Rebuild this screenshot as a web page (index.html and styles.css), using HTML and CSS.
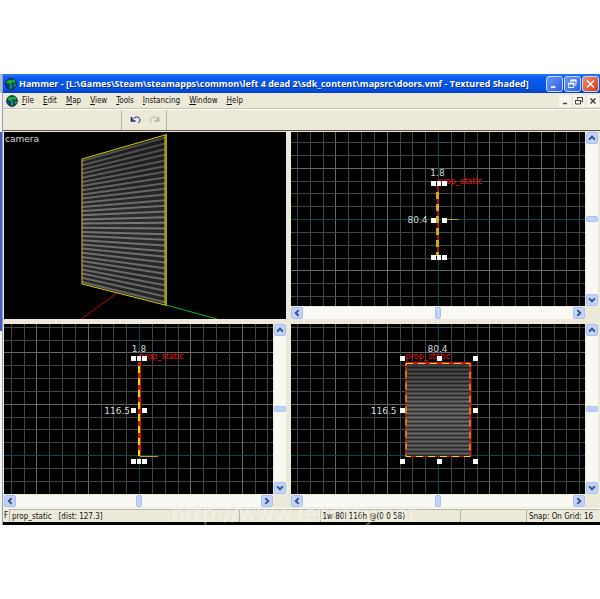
FILE: index.html
```
<!DOCTYPE html>
<html lang="en">
<head>
    <meta charset="UTF-8">
    <meta name="viewport" content="width=device-width, initial-scale=1.0">
    <title>Hammer</title>
    <link rel="stylesheet" href="styles.css">
</head>
<body>

    <!-- shared shapes -->
    <svg class="defs" width="0" height="0" aria-hidden="true">
        <defs>
            <symbol id="logo" viewBox="0 0 12 12">
                <circle cx="6" cy="6" r="5.4" fill="#1238a8" stroke="#06103c" stroke-width="0.8"/>
                <path d="M1 4 L4 1.4 L6.6 2.2 L8.6 1 L11 4 L8.4 5.4 L7 4.2 L6.4 6 L7.4 8 L6.6 11.4 L4.6 10.4 L5 7.4 L4 5.4 L2.4 6 Z" fill="#19b52c" stroke="#053c10" stroke-width="0.5"/>
                <path d="M9 6.4 L11 6 L10.4 8.6 L9 9 Z" fill="#19b52c"/>
            </symbol>
            <symbol id="up" viewBox="0 0 12 12">
                <path d="M2.5 8 L6 4.5 L9.5 8" fill="none" stroke="#3d5584" stroke-width="2.4"/>
            </symbol>
            <symbol id="down" viewBox="0 0 12 12">
                <path d="M2.5 4 L6 7.5 L9.5 4" fill="none" stroke="#3d5584" stroke-width="2.4"/>
            </symbol>
            <symbol id="left" viewBox="0 0 12 12">
                <path d="M8 2.5 L4.5 6 L8 9.5" fill="none" stroke="#3d5584" stroke-width="2.4"/>
            </symbol>
            <symbol id="right" viewBox="0 0 12 12">
                <path d="M4 2.5 L7.5 6 L4 9.5" fill="none" stroke="#3d5584" stroke-width="2.4"/>
            </symbol>
            <pattern id="metal" width="65" height="4" patternUnits="userSpaceOnUse">
                <rect width="65" height="4" fill="#5a5a5a"/>
                <rect width="65" height="1" y="1" fill="#707070"/>
                <rect width="65" height="1" y="3" fill="#303030"/>
            </pattern>
            <linearGradient id="shade" x1="0" y1="0" x2="0" y2="1">
                <stop offset="0" stop-color="#000" stop-opacity="0.45"/>
                <stop offset="0.5" stop-color="#000" stop-opacity="0.05"/>
                <stop offset="1" stop-color="#000" stop-opacity="0.2"/>
            </linearGradient>
        </defs>
    </svg>

    <div class="desktop">
        <div class="neighbor"></div>
        <div class="app">
            <header class="titlebar">
                <svg class="logo"><use href="#logo"/></svg>
                <h1>Hammer - [L:\Games\Steam\steamapps\common\left 4 dead 2\sdk_content\mapsrc\doors.vmf - Textured Shaded]</h1>
                <div class="window-buttons">
                    <button aria-label="Minimize"><svg viewBox="0 0 16 16"><path d="M4 11.5h5" stroke="#fff" stroke-width="2"/></svg></button>
                    <button aria-label="Restore"><svg viewBox="0 0 16 16"><path d="M6 6V3.5h6V9H10" fill="none" stroke="#fff"/><path d="M6 4h6.500" stroke="#fff" stroke-width="2"/><path d="M3.500 7.500h6v4.500h-6z" fill="none" stroke="#fff"/><path d="M3 7.500h7" stroke="#fff" stroke-width="2"/></svg></button>
                    <button class="close" aria-label="Close"><svg viewBox="0 0 16 16"><path d="M4 4l8 8M12 4l-8 8" stroke="#fff" stroke-width="1.8"/></svg></button>
                </div>
            </header>

            <nav class="menubar">
                <svg class="logo"><use href="#logo"/></svg>
                <div class="menus">
                    <button><u>F</u>ile</button>
                    <button><u>E</u>dit</button>
                    <button><u>M</u>ap</button>
                    <button><u>V</u>iew</button>
                    <button><u>T</u>ools</button>
                    <button><u>I</u>nstancing</button>
                    <button><u>W</u>indow</button>
                    <button><u>H</u>elp</button>
                </div>
                <div class="child-buttons">
                    <button aria-label="Minimize document"><svg viewBox="0 0 12 12"><path d="M4 8.500h4" stroke="#444" stroke-width="1.500"/></svg></button>
                    <button aria-label="Restore document"><svg viewBox="0 0 12 12"><path d="M4.500 4.500V2.500h5v4H8M4 2.500h6" fill="none" stroke="#444"/><path d="M2.500 5.500h5v3.500h-5zM2 5.500h6" fill="none" stroke="#444"/></svg></button>
                    <button aria-label="Close document"><svg viewBox="0 0 12 12"><path d="M3.500 3.500l5 5M8.500 3.500l-5 5" stroke="#444" stroke-width="1.500"/></svg></button>
                </div>
            </nav>

            <div class="toolbar">
                <div class="tool-group">
                    <button aria-label="Undo"><svg viewBox="0 0 12 10"><path d="M1.500 2v4h4" fill="none" stroke="#16237e" stroke-width="1.600"/><path d="M2 5.500C3.500 2.500 6 1.500 8 2.200C10.800 3.200 10.500 7 8 8" fill="none" stroke="#16237e"/></svg></button>
                    <button aria-label="Redo" disabled><svg viewBox="0 0 12 10"><path d="M10.500 2v4h-4" fill="none" stroke="#b4b1a2" stroke-width="1.600"/><path d="M10 5.500C8.500 2.500 6 1.500 4 2.200C1.200 3.200 1.500 7 4 8" fill="none" stroke="#b4b1a2"/></svg></button>
                </div>
            </div>

            <main class="views">
                <section class="view camera">
                    <svg class="scene" viewBox="0 0 282 187" preserveAspectRatio="xMidYMid slice">
                        <path d="M113 161L77 187" stroke="#a81414"/>
                        <path d="M162 173L213 187" stroke="#00b828"/>
                        <polygon points="78,27 161,3 161,173 78,152" fill="#2e2e2e"/>
                        <g id="slats"></g>
                        <polygon points="78,27 161,3 161,173 78,152" fill="url(#shade)"/>
                        <polygon points="78,27 161,3 161,173 78,152" fill="none" stroke="#d2c800"/>
                        <path d="M162 2V174" stroke="#a39b10" stroke-width="2"/>
                        <text x="1" y="10" class="label">camera</text>
                    </svg>
                </section>

                <section class="view flat">
                    <svg class="scene" viewBox="0 0 295 174" preserveAspectRatio="xMidYMid slice">
                        <g class="grid" data-x="147" data-y="87" data-w="295" data-h="174"></g>
                        <path d="M156 87.500h12" stroke="#b0a600"/>
                        <text x="147" y="52" class="name">prop_static</text>
                        <path d="M147.500 54V125" stroke="#b01010" stroke-width="2"/>
                        <path d="M147 60V124" stroke="#c9b010" stroke-width="3" stroke-dasharray="7 5"/>
                        <path class="handle" d="M140 49h5v5h-5zM146 49h4v5h-4zM151 49h5v5h-5zM140 86h5v5h-5zM151 86h5v5h-5zM140 123h5v5h-5zM146 123h4v5h-4zM151 123h5v5h-5z"/>
                        <text x="147" y="44" class="label middle">1.8</text>
                        <text x="137" y="91" class="label end">80.4</text>
                    </svg>
                    <div class="scrollbar vertical">
                        <button aria-label="Scroll up"><svg><use href="#up"/></svg></button>
                        <span class="thumb"></span>
                        <button aria-label="Scroll down"><svg><use href="#down"/></svg></button>
                    </div>
                    <div class="scrollbar horizontal">
                        <button aria-label="Scroll left"><svg><use href="#left"/></svg></button>
                        <span class="thumb"></span>
                        <button aria-label="Scroll right"><svg><use href="#right"/></svg></button>
                    </div>
                </section>

                <section class="view flat">
                    <svg class="scene" viewBox="0 0 269 170" preserveAspectRatio="xMidYMid slice">
                        <g class="grid" data-x="135" data-y="131" data-w="269" data-h="170"></g>
                        <text x="135" y="35" class="name">prop_static</text>
                        <path d="M135.500 38V132" stroke="#d01414" stroke-width="3"/>
                        <path d="M135 42V132" stroke="#e6dc14" stroke-width="2" stroke-dasharray="7 5"/>
                        <path d="M136 132.500h18" stroke="#b0a600"/>
                        <path class="handle" d="M127 32h5v5h-5zM133 32h4v5h-4zM138 32h5v5h-5zM127 84h5v5h-5zM138 84h5v5h-5zM127 135h5v5h-5zM133 135h4v5h-4zM138 135h5v5h-5z"/>
                        <text x="135" y="28" class="label middle">1.8</text>
                        <text x="126" y="90" class="label end">116.5</text>
                    </svg>
                    <div class="scrollbar vertical">
                        <button aria-label="Scroll up"><svg><use href="#up"/></svg></button>
                        <span class="thumb"></span>
                        <button aria-label="Scroll down"><svg><use href="#down"/></svg></button>
                    </div>
                    <div class="scrollbar horizontal">
                        <button aria-label="Scroll left"><svg><use href="#left"/></svg></button>
                        <span class="thumb"></span>
                        <button aria-label="Scroll right"><svg><use href="#right"/></svg></button>
                    </div>
                </section>

                <section class="view flat">
                    <svg class="scene" viewBox="0 0 295 170" preserveAspectRatio="xMidYMid slice">
                        <g class="grid" data-x="147" data-y="131" data-w="295" data-h="170"></g>
                        <rect x="115" y="38" width="65" height="95" fill="url(#metal)"/>
                        <rect x="115" y="38" width="65" height="95" fill="url(#shade)"/>
                        <text x="115" y="35" class="name">prop_static</text>
                        <path d="M115.500 38.500h65v94h-65z" fill="none" stroke="#e01010"/>
                        <path d="M115.500 39.500h64v93h-64z" fill="none" stroke="#d01414"/>
                        <path d="M115.500 39.500h64v93h-64z" fill="none" stroke="#e6dc14" stroke-dasharray="7 5"/>
                        <path class="handle" d="M109 32h5v5h-5zM146 32h5v5h-5zM182 32h5v5h-5zM109 84h5v5h-5zM182 84h5v5h-5zM109 135h5v5h-5zM146 135h5v5h-5zM182 135h5v5h-5z"/>
                        <text x="147" y="28" class="label middle">80.4</text>
                        <text x="106" y="90" class="label end">116.5</text>
                    </svg>
                    <div class="scrollbar vertical">
                        <button aria-label="Scroll up"><svg><use href="#up"/></svg></button>
                        <span class="thumb"></span>
                        <button aria-label="Scroll down"><svg><use href="#down"/></svg></button>
                    </div>
                    <div class="scrollbar horizontal">
                        <button aria-label="Scroll left"><svg><use href="#left"/></svg></button>
                        <span class="thumb"></span>
                        <button aria-label="Scroll right"><svg><use href="#right"/></svg></button>
                    </div>
                </section>
            </main>

            <footer class="statusbar">
                <span class="help">F</span>
                <span class="cell">prop_static &nbsp; [dist: 127.3]</span>
                <span class="cell"></span>
                <span class="cell">1w 80l 116h @(0 0 58)</span>
                <span class="cell"></span>
                <span class="cell">Snap: On Grid: 16</span>
                <span class="watermark">http://www.leccray.net</span>
            </footer>
        </div>
    </div>

    <script>
        const SVG = 'http://www.w3.org/2000/svg';

        function addLine(parent, x1, y1, x2, y2, color) {
            const line = document.createElementNS(SVG, 'path');
            line.setAttribute('d', `M${x1} ${y1}L${x2} ${y2}`);
            line.setAttribute('stroke', color);
            parent.appendChild(line);
            return line;
        }

        // grid lines count outwards from the world origin, every fourth one is brighter
        function drawGrid(group) {
            const { x, y, w, h } = group.dataset;
            const step = 77 / 6;
            const tone = i => i % 4 === 0 ? '#686868' : '#444';

            for (let i = -12; i <= 12; i++) {
                const lineX = Number(x) + Math.round(i * step) + 0.5;
                const lineY = Number(y) + Math.round(i * step) + 0.5;
                addLine(group, lineX, 0, lineX, h, tone(i));
                addLine(group, 0, lineY, w, lineY, tone(i));
            }
            addLine(group, Number(x) + 0.5, 0, Number(x) + 0.5, h, '#004a48');
            addLine(group, 0, Number(y) + 0.5, w, Number(y) + 0.5, '#004a48');
        }

        function drawSlats(group) {
            const count = 30;
            for (let i = 0; i < count; i++) {
                const t = (i + 0.5) / count;
                const line = addLine(group, 78, 27 + 125 * t, 161, 3 + 170 * t, '#7c7c7c');
                line.setAttribute('stroke-width', 2);
            }
        }

        document.querySelectorAll('.grid').forEach(drawGrid);
        drawSlats(document.getElementById('slats'));
    </script>
</body>
</html>
```
FILE: styles.css
```
* {
    box-sizing: border-box;
}
body {
    margin: 0;
    height: 100vh;
    padding: 74px 0;
    background: #fff;
    font-family: "DejaVu Sans Condensed", "DejaVu Sans", sans-serif;
    font-size: 8px;
    color: #111;
}
button {
    display: block;
    margin: 0;
    padding: 0;
    border: none;
    background: none;
    font: inherit;
    color: inherit;
}
svg {
    display: block;
}
.defs {
    position: absolute;
}
.desktop {
    display: flex;
    height: 100%;
}
.neighbor {
    width: 3px;
    border-right: 1px solid #8ea0c4;
    background: linear-gradient(#b4b8c8 0 19px, #f4f3ec 19px 58px, #4b5cc8 58px 257px, #f6f4e8 257px);
}
.app {
    flex: 1;
    min-width: 0;
    display: flex;
    flex-direction: column;
    background: #ece9d8;
    border-bottom: 3px solid #000;
}

/* title bar */
.titlebar {
    display: flex;
    align-items: center;
    height: 19px;
    padding: 0 1px 0 2px;
    background: linear-gradient(#2a7af4, #0a5cf0 20%, #0455e6 75%, #0340c0);
}
.logo {
    flex: none;
    width: 12px;
    height: 12px;
}
.titlebar h1 {
    flex: 1;
    min-width: 0;
    margin: 0;
    padding-left: 2px;
    font-family: "Open Sans", sans-serif;
    font-size: 9px;
    font-weight: bold;
    line-height: 18px;
    color: #fff;
    text-shadow: 1px 1px #0a2c8c;
    white-space: nowrap;
    overflow: hidden;
}
.window-buttons {
    display: flex;
    gap: 1px;
}
.window-buttons button {
    width: 17px;
    height: 16px;
    border: 1px solid #c8d8fc;
    border-radius: 3px;
    background: linear-gradient(135deg, #6a98f8, #2a5ce0);
}
.window-buttons .close {
    background: linear-gradient(135deg, #ee8a68, #d23c14);
}
.window-buttons svg {
    width: 15px;
    height: 14px;
}

/* menu bar */
.menubar {
    display: flex;
    align-items: center;
    height: 16px;
    padding: 0 1px 0 3px;
    border-bottom: 1px solid #c5c2b2;
}
.menus {
    flex: 1;
    display: flex;
    gap: 9px;
    padding-left: 4px;
    line-height: 12px;
}
.child-buttons {
    display: flex;
    gap: 2px;
}
.child-buttons button {
    width: 12px;
    height: 12px;
    background: #f6f5ee;
}

/* toolbar */
.toolbar {
    height: 22px;
    padding-left: 118px;
    border-top: 1px solid #fff;
    border-bottom: 1px solid #55534a;
}
.tool-group {
    display: flex;
    align-items: center;
    gap: 6px;
    width: 46px;
    height: 100%;
    padding-left: 8px;
    border-left: 1px solid #b8b5a6;
    border-right: 1px solid #b8b5a6;
}
.tool-group svg {
    width: 12px;
    height: 10px;
}

/* viewports */
.views {
    flex: 1;
    min-height: 0;
    display: grid;
    grid-template-columns: 282fr 307fr;
    grid-template-rows: 187fr 183fr;
    gap: 5px;
    padding: 1px 2px 1px 1px;
}
.view {
    min-width: 0;
    min-height: 0;
    background: #000;
}
.flat {
    display: grid;
    grid-template-columns: 1fr 12px;
    grid-template-rows: 1fr 12px;
    gap: 1px;
    background: #ece9d8;
}
.scene {
    width: 100%;
    height: 100%;
    min-width: 0;
    min-height: 0;
    background: #000;
}
.grid,
.handle {
    shape-rendering: crispEdges;
}
.handle {
    fill: #fff;
}
.label,
.name {
    font-family: "DejaVu Sans", sans-serif;
    font-size: 9px;
    fill: #d8d8d8;
}
.name {
    font-family: "DejaVu Sans Condensed", "DejaVu Sans", sans-serif;
    fill: #f01414;
}
.middle {
    text-anchor: middle;
}
.end {
    text-anchor: end;
}

/* scrollbars */
.scrollbar {
    display: flex;
    justify-content: space-between;
    background: #f9f8f3;
}
.vertical {
    flex-direction: column;
}
.scrollbar button,
.thumb {
    border: 1px solid #a9c0f2;
    border-radius: 2px;
    background: #c2d3fb;
}
.scrollbar button {
    width: 12px;
    height: 12px;
}
.scrollbar svg {
    width: 10px;
    height: 10px;
}
.thumb {
    align-self: center;
}
.vertical .thumb {
    width: 12px;
    height: 6px;
}
.horizontal .thumb {
    width: 6px;
    height: 12px;
}

/* status bar */
.statusbar {
    position: relative;
    display: grid;
    grid-template-columns: 4px 229fr 79fr 139fr 65fr 73fr;
    gap: 1px;
    height: 14px;
    padding: 0 1px;
    border-top: 1px solid #fff;
    line-height: 13px;
    white-space: nowrap;
}
.cell {
    min-width: 0;
    padding-left: 2px;
    border-top: 1px solid #b5b2a2;
    border-left: 1px solid #b5b2a2;
    overflow: hidden;
}
.watermark {
    position: absolute;
    left: 168px;
    top: -6px;
    font-family: "DejaVu Sans", sans-serif;
    font-size: 22px;
    line-height: 22px;
    color: rgba(255, 255, 255, 0.35);
    pointer-events: none;
}
```
